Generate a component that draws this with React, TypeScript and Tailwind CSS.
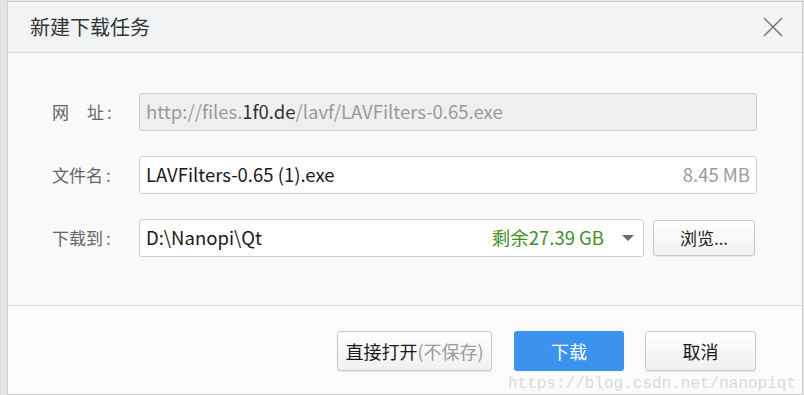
import React from "react";

const font = { fontFamily: '"Noto Sans CJK SC", "Noto Sans", sans-serif' };

function CloseIcon() {
  return (
    <svg width="22" height="22" viewBox="0 0 22 22" className="block">
      <path d="M2 2 L20 20 M20 2 L2 20" stroke="#6f6f6f" strokeWidth="1.4" fill="none" />
    </svg>
  );
}

function Label({ children }: { children: React.ReactNode }) {
  return (
    <div className="w-[87px] shrink-0 text-[17px] text-[#666] flex items-center">
      {children}
      <span className="ml-[3px]">:</span>
    </div>
  );
}

export default function App() {
  return (
    <div
      className="w-[804px] h-[395px] bg-[#e4e4e4] pl-[7px] pt-[1px] pr-[1px] overflow-hidden"
      style={font}
    >
      <div className="relative h-[394px] border border-[#cdcdcd] flex flex-col bg-white">
        {/* title bar */}
        <div className="h-[51px] shrink-0 bg-[#f2f3f5] border-b border-[#d6d6d6] flex items-center justify-between pl-[22px] pr-[18px]">
          <span className="text-[20px] text-[#333] leading-none">新建下载任务</span>
          <CloseIcon />
        </div>

        {/* body */}
        <div className="h-[253px] shrink-0 bg-[#f9f9f9] border-b border-[#dcdcdc] pl-[44px] pr-[45px] pt-[40px] flex flex-col gap-[25px]">
          <div className="flex items-center">
            <Label>
              <span className="flex w-[52px] justify-between">
                <span>网</span>
                <span>址</span>
              </span>
            </Label>
            <div className="flex-1 h-[38px] rounded-[3px] border border-[#cfcfcf] bg-[#efefef] flex items-center px-[6px] text-[18.5px] text-[#9a9a9a]">
              http://files.<span className="text-[#333]">1f0.de</span>/lavf/LAVFilters-0.65.exe
            </div>
          </div>

          <div className="flex items-center">
            <Label>文件名</Label>
            <div className="flex-1 h-[38px] rounded-[3px] border border-[#cfcfcf] bg-white flex items-center justify-between px-[6px] text-[18.5px]">
              <span className="text-[#1a1a1a]">LAVFilters-0.65 (1).exe</span>
              <span className="text-[#9a9a9a]">8.45 MB</span>
            </div>
          </div>

          <div className="flex items-center">
            <Label>下载到</Label>
            <div className="w-[505px] h-[38px] rounded-[3px] border border-[#cfcfcf] bg-white flex items-center px-[6px] text-[18.5px]">
              <span className="flex-1 text-[#1a1a1a]">D:\Nanopi\Qt</span>
              <span className="text-[#3f8f2a]">剩余27.39 GB</span>
              <svg width="12" height="6" viewBox="0 0 12 6" className="ml-[18px] mr-[3px]">
                <path d="M0 0 L12 0 L6 6 Z" fill="#6a6a6a" />
              </svg>
            </div>
            <button className="ml-[9px] w-[102px] h-[36px] rounded-[3px] border border-[#c8c8c8] bg-gradient-to-b from-white to-[#f0f0f0] text-[17px] text-[#222] shadow-[0_1px_1px_rgba(0,0,0,0.08)]">
              浏览...
            </button>
          </div>
        </div>

        {/* footer */}
        <div className="flex-1 bg-[#fbfbfb] flex justify-end items-start pt-[25px] pr-[46px]">
          <button className="w-[155px] h-[40px] rounded-[3px] border border-[#c8c8c8] bg-gradient-to-b from-white to-[#f0f0f0] text-[18px] text-[#1a1a1a] shadow-[0_1px_1px_rgba(0,0,0,0.08)]">
            直接打开<span className="text-[#9a9a9a]">(不保存)</span>
          </button>
          <button className="ml-[22px] w-[110px] h-[40px] rounded-[3px] bg-[#3b92ef] text-[18px] text-white">
            下载
          </button>
          <button className="ml-[21px] w-[111px] h-[40px] rounded-[3px] border border-[#c8c8c8] bg-gradient-to-b from-white to-[#f0f0f0] text-[18px] text-[#1a1a1a] shadow-[0_1px_1px_rgba(0,0,0,0.08)]">
            取消
          </button>
        </div>

        <div
          className="absolute right-[6px] bottom-[2px] text-[16px] text-[#dadada] leading-none whitespace-nowrap"
          style={{ fontFamily: '"Liberation Mono", monospace' }}
        >
          https://blog.csdn.net/nanopiqt
        </div>
      </div>
    </div>
  );
}
